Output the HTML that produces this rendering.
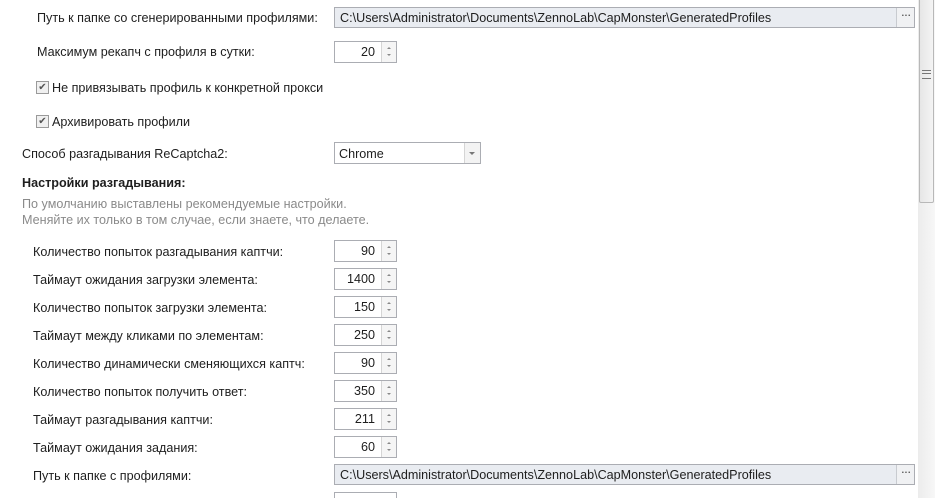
<!DOCTYPE html>
<html style="overflow:hidden;height:498px"><head><meta charset="utf-8"><style>
body{margin:0;width:939px;height:498px;background:#fff;overflow:hidden;position:relative;font-family:"Liberation Sans",sans-serif;font-size:12.6px;color:#1e1e1e}
.a{position:absolute;white-space:nowrap;line-height:14px}
.path{position:absolute;left:334px;width:579px;height:19px;border:1px solid #abadb3;background:#e9ecf1}
.path span{position:absolute;left:5px;top:3px}
.path b{position:absolute;right:0;top:0;width:17px;height:19px;border-left:1px solid #c8cbd0;background:#f0f1f3;font-weight:normal;text-align:center;line-height:14px;letter-spacing:-1px;color:#444}
.spin{position:absolute;left:334px;width:61px;height:20px;border:1px solid #abadb3;background:#fff}
.spin span{position:absolute;right:21px;top:3px}
.spin i{position:absolute;right:0;top:0;width:14px;height:20px;border-left:1px solid #d5d5d5;background:#f5f5f5}
.spin i:before{content:"";position:absolute;left:5px;top:5px;border:2px solid transparent;border-bottom:2px solid #888;border-top:0}
.spin i:after{content:"";position:absolute;left:5px;top:12px;border:2px solid transparent;border-top:2px solid #888;border-bottom:0}
.cb{position:absolute;left:36px;width:11px;height:11px;border:1px solid #9a9a9a;background:#f0f0f0;font-size:10px;line-height:11px;text-align:center;color:#555}
</style></head><body>
<div class="a" style="left:37px;top:11px">Путь к папке со сгенерированными профилями:</div>
<div class="path" style="top:7px"><span>C:\Users\Administrator\Documents\ZennoLab\CapMonster\GeneratedProfiles</span><b>···</b></div>
<div class="a" style="left:37px;top:45px">Максимум рекапч с профиля в сутки:</div>
<div class="spin" style="top:41px"><span>20</span><i></i></div>
<div class="cb" style="top:81px">✔</div><div class="a" style="left:52px;top:81px">Не привязывать профиль к конкретной прокси</div>
<div class="cb" style="top:115px">✔</div><div class="a" style="left:52px;top:115px">Архивировать профили</div>
<div class="a" style="left:22px;top:147px">Способ разгадывания ReCaptcha2:</div>
<div style="position:absolute;left:334px;top:142px;width:145px;height:20px;border:1px solid #abadb3;background:#fff"><span class="a" style="left:4px;top:4px">Chrome</span><div style="position:absolute;right:0;top:0;width:15px;height:20px;border-left:1px solid #d5d5d5;background:#f3f3f3"><div style="position:absolute;left:4px;top:9px;border:3px solid transparent;border-top:3px solid #777;border-bottom:0"></div></div></div>
<div class="a" style="left:22px;top:176px;font-weight:bold">Настройки разгадывания:</div>
<div class="a" style="left:22px;top:197px;color:#8a8a8a">По умолчанию выставлены рекомендуемые настройки.</div>
<div class="a" style="left:22px;top:213px;color:#8a8a8a">Меняйте их только в том случае, если знаете, что делаете.</div>
<div class="a" style="left:33px;top:245px">Количество попыток разгадывания каптчи:</div><div class="spin" style="top:240px"><span>90</span><i></i></div>
<div class="a" style="left:33px;top:273px">Таймаут ожидания загрузки элемента:</div><div class="spin" style="top:268px"><span>1400</span><i></i></div>
<div class="a" style="left:33px;top:301px">Количество попыток загрузки элемента:</div><div class="spin" style="top:296px"><span>150</span><i></i></div>
<div class="a" style="left:33px;top:329px">Таймаут между кликами по элементам:</div><div class="spin" style="top:324px"><span>250</span><i></i></div>
<div class="a" style="left:33px;top:357px">Количество динамически сменяющихся каптч:</div><div class="spin" style="top:352px"><span>90</span><i></i></div>
<div class="a" style="left:33px;top:385px">Количество попыток получить ответ:</div><div class="spin" style="top:380px"><span>350</span><i></i></div>
<div class="a" style="left:33px;top:413px">Таймаут разгадывания каптчи:</div><div class="spin" style="top:408px"><span>211</span><i></i></div>
<div class="a" style="left:33px;top:441px">Таймаут ожидания задания:</div><div class="spin" style="top:436px"><span>60</span><i></i></div>
<div class="a" style="left:33px;top:469px">Путь к папке с профилями:</div>
<div class="path" style="top:464px"><span>C:\Users\Administrator\Documents\ZennoLab\CapMonster\GeneratedProfiles</span><b>···</b></div>
<div style="position:absolute;left:334px;top:492px;width:63px;height:6px;border-top:1px solid #abadb3;border-left:1px solid #abadb3;border-right:1px solid #abadb3;box-sizing:border-box"></div>
<div style="position:absolute;left:918px;top:0;width:17px;height:498px;background:linear-gradient(90deg,#ececec,#f7f7f7)"></div>
<div style="position:absolute;left:919px;top:-2px;width:13px;height:203px;border:1px solid #b8b8b8;border-radius:2px;background:linear-gradient(90deg,#e6e6e6,#f4f4f4)"></div>
<div style="position:absolute;left:922px;top:70px;width:9px;height:7px;border-top:1px solid #777;border-bottom:1px solid #777"></div>
<div style="position:absolute;left:922px;top:73px;width:9px;height:1px;background:#777"></div>
</body></html>
